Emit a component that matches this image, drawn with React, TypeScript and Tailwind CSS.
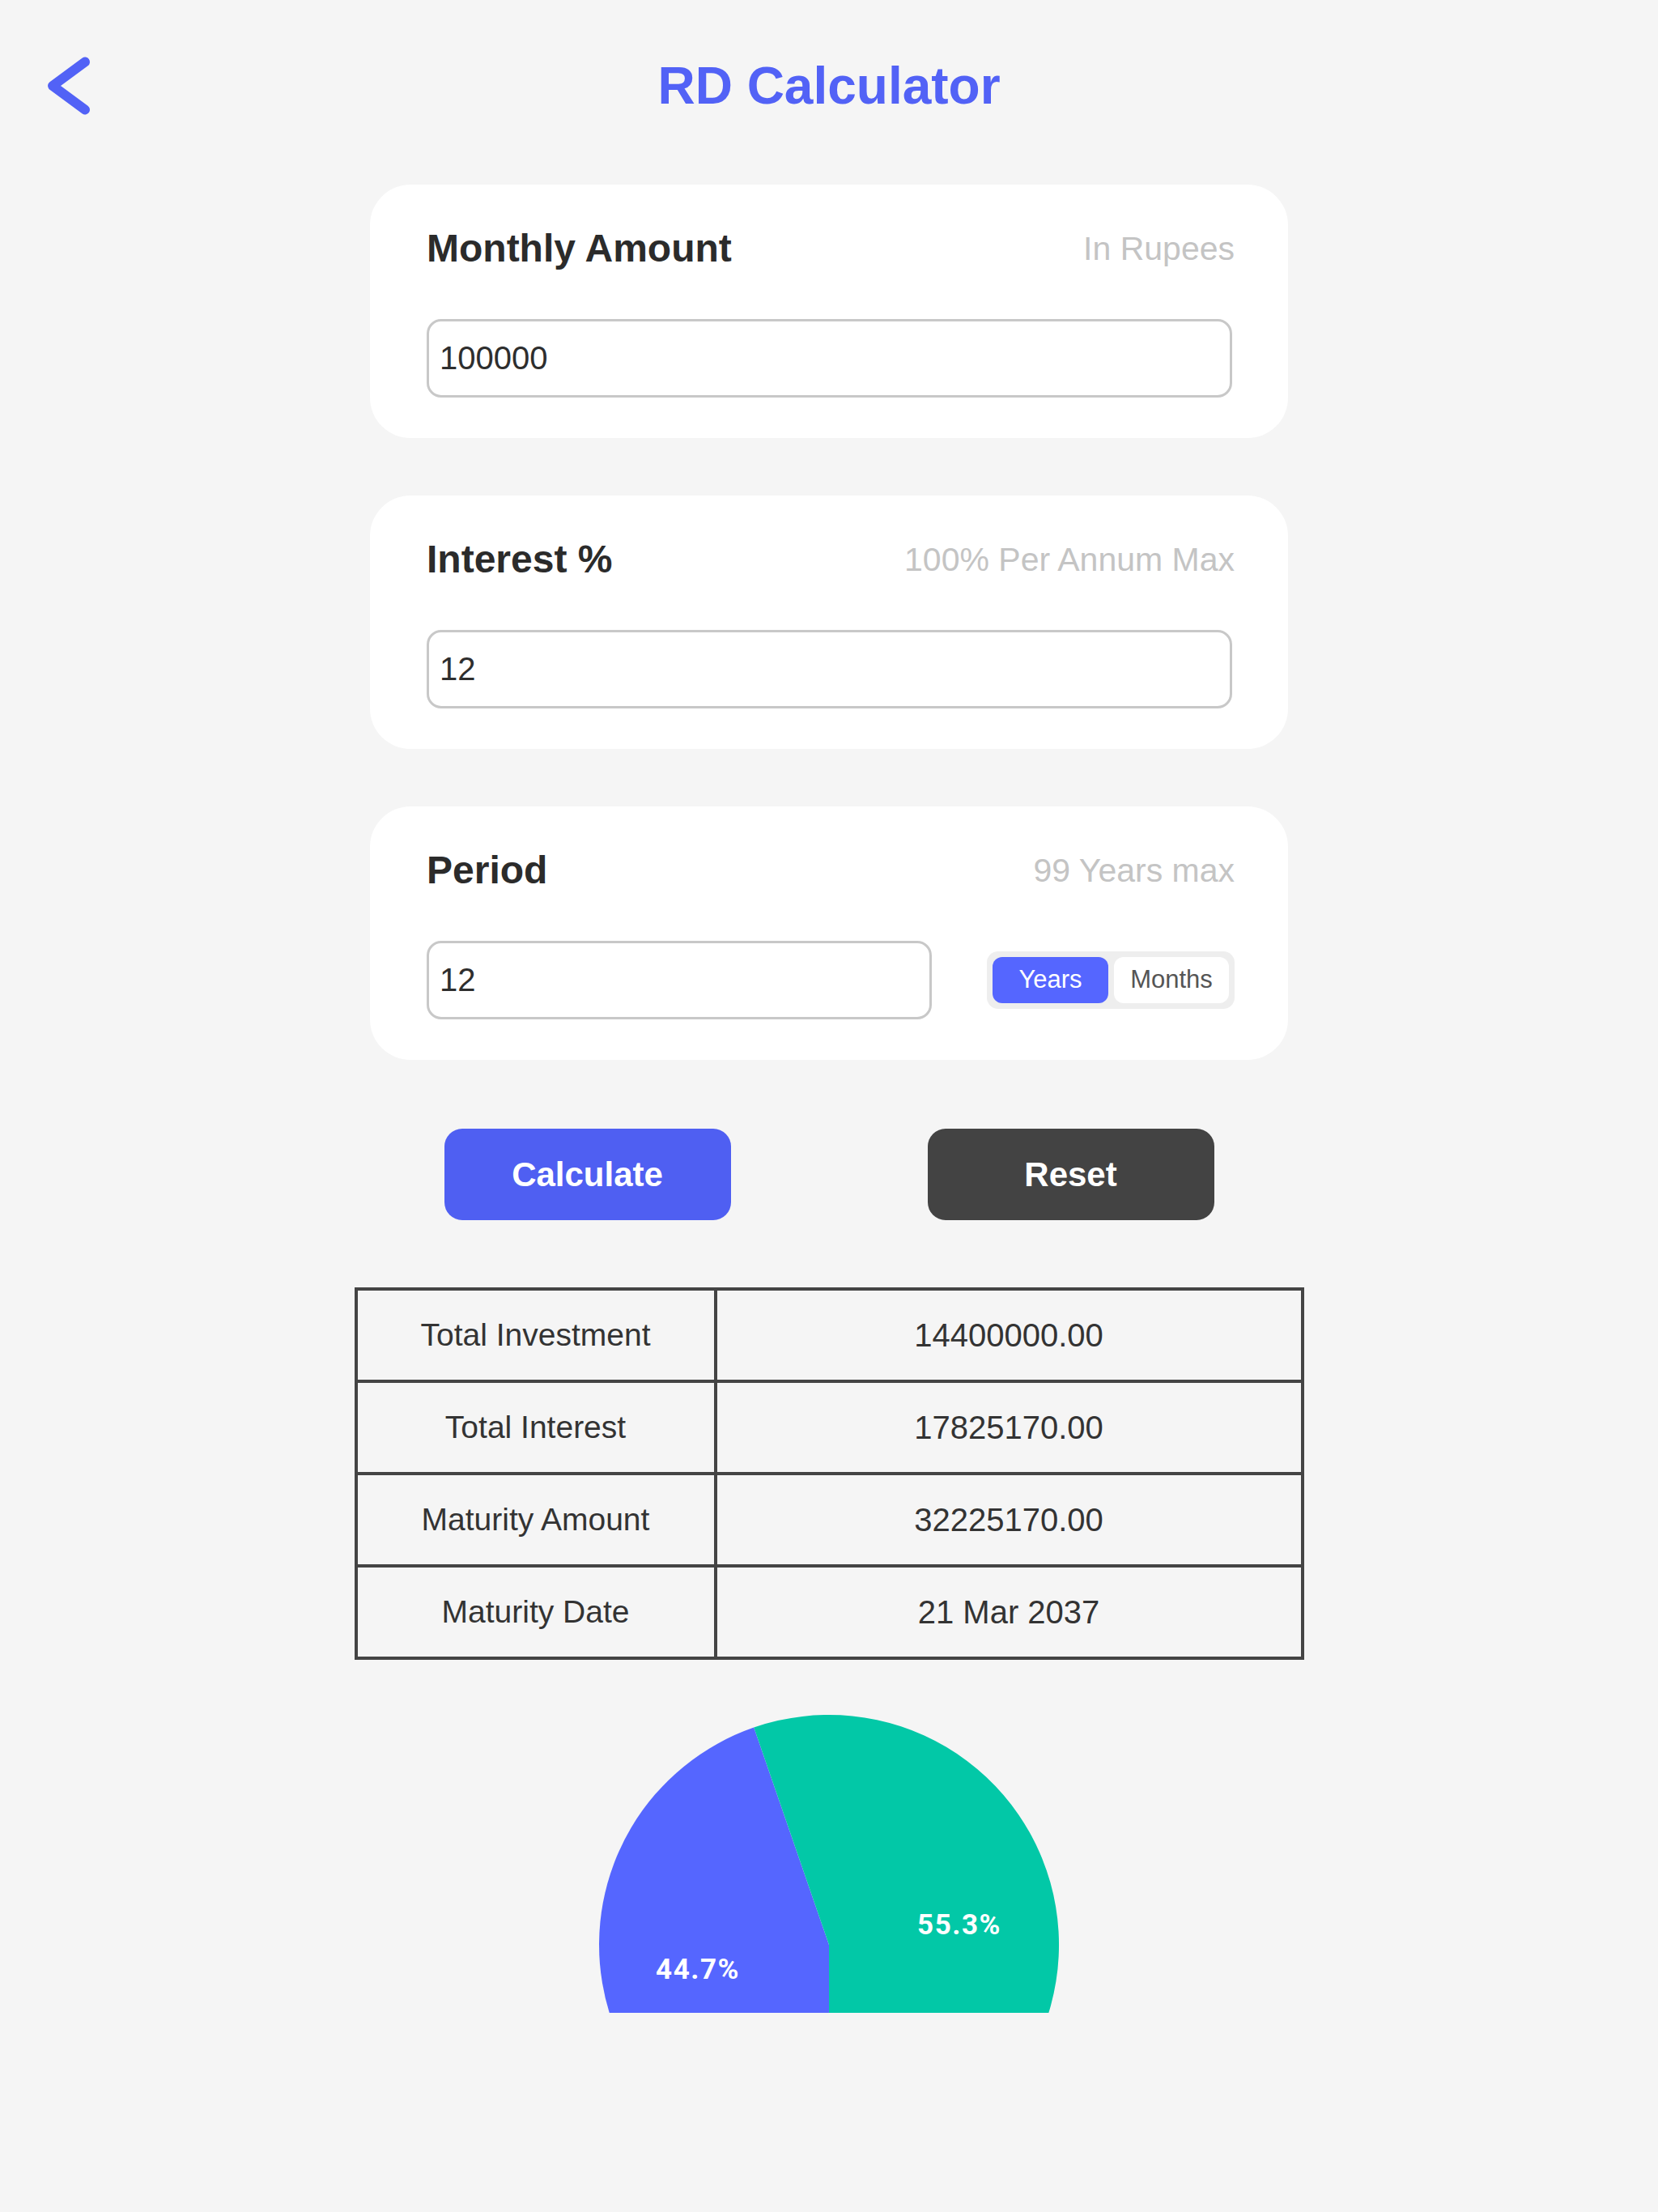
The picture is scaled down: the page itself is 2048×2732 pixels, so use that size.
// App.tsx — RD calculator screen: three input cards, actions, results table and a clipped pie

const results = [
  { label: "Total Investment", value: "14400000.00" },
  { label: "Total Interest", value: "17825170.00" },
  { label: "Maturity Amount", value: "32225170.00" },
  { label: "Maturity Date", value: "21 Mar 2037" },
];

function BackChevron() {
  return (
    <svg width="70" height="90" viewBox="0 0 70 90" fill="none">
      <path
        d="M53 15.5 L13 45 L53 74.5"
        stroke="#5262f6"
        strokeWidth="12"
        strokeLinecap="round"
        strokeLinejoin="round"
      />
    </svg>
  );
}

interface FieldCardProps {
  readonly label: string;
  readonly hint: string;
  readonly children: React.ReactNode;
}

function FieldCard({ label, hint, children }: FieldCardProps) {
  return (
    <div className="w-[1134px] rounded-[50px] bg-white pt-[51px] pr-[66px] pb-[50px] pl-[70px]">
      <div className="flex h-[56px] items-center justify-between">
        <span className="text-[48px] font-bold leading-[56px] text-[#2b2b2b]">{label}</span>
        <span className="text-[41px] leading-[56px] text-[#c4c4c4]">{hint}</span>
      </div>
      <div className="mt-[59px]">{children}</div>
    </div>
  );
}

function TextBox({ value, width }: { readonly value: string; readonly width: string }) {
  return (
    <input
      readOnly
      value={value}
      className={`${width} h-[97px] rounded-[18px] border-[3px] border-[#c8c8c8] bg-white pl-[13px] font-['Liberation_Sans',Arial,sans-serif] text-[40px] text-[#2e2e2e] outline-none`}
    />
  );
}

function PieChart() {
  return (
    <svg width="600" height="372" viewBox="0 0 600 372">
      <path d="M300 288 L300 572 A284 284 0 0 1 207.2 19.6 Z" fill="#5566ff" />
      <path d="M300 288 L207.2 19.6 A284 284 0 1 1 300 572 Z" fill="#02c8a7" />
      <text
        x="461"
        y="275"
        textAnchor="middle"
        fill="#ffffff"
        fontFamily="Roboto, 'Noto Sans', sans-serif"
        fontWeight="700"
        fontSize="35"
        letterSpacing="1.5"
      >
        55.3%
      </text>
      <text
        x="138"
        y="330"
        textAnchor="middle"
        fill="#ffffff"
        fontFamily="Roboto, 'Noto Sans', sans-serif"
        fontWeight="700"
        fontSize="35"
        letterSpacing="1.5"
      >
        44.7%
      </text>
    </svg>
  );
}

export default function App() {
  return (
    <div className="flex min-h-[2732px] flex-col items-center bg-[#f5f5f5] font-['Liberation_Sans',Arial,sans-serif]">
      {/* Header */}
      <div className="grid h-[212px] w-full grid-cols-[1fr_auto_1fr] items-center px-[52px]">
        <div className="flex items-center">
          <BackChevron />
        </div>
        <h1 className="text-[64px] font-bold leading-none text-[#5262f6]">RD Calculator</h1>
        <div />
      </div>

      {/* Inputs */}
      <div className="mt-[16px] flex flex-col gap-[71px]">
        <FieldCard label="Monthly Amount" hint="In Rupees">
          <TextBox value="100000" width="w-[995px]" />
        </FieldCard>
        <FieldCard label="Interest %" hint="100% Per Annum Max">
          <TextBox value="12" width="w-[995px]" />
        </FieldCard>
        <FieldCard label="Period" hint="99 Years max">
          <div className="flex items-center justify-between">
            <TextBox value="12" width="w-[624px]" />
            <div className="flex gap-[7px] rounded-[14px] bg-[#eeeeee] p-[7px]">
              <button className="h-[57px] w-[143px] rounded-[12px] bg-[#5566ff] text-[31px] text-white">
                Years
              </button>
              <button className="h-[57px] w-[142px] rounded-[12px] bg-white text-[31px] text-[#555555]">
                Months
              </button>
            </div>
          </div>
        </FieldCard>
      </div>

      {/* Actions */}
      <div className="mt-[85px] flex gap-[243px]">
        <button className="h-[113px] w-[354px] rounded-[22px] bg-[#4f5ff2] text-[42px] font-bold text-white">
          Calculate
        </button>
        <button className="h-[113px] w-[354px] rounded-[22px] bg-[#434343] text-[42px] font-bold text-white">
          Reset
        </button>
      </div>

      {/* Results */}
      <table className="mt-[83px] w-[1173px] table-fixed border-collapse">
        <colgroup>
          <col className="w-[444px]" />
          <col />
        </colgroup>
        <tbody>
          {results.map((row) => (
            <tr key={row.label} className="h-[114px]">
              <td className="border-[4px] border-[#444444] text-center text-[39px] text-[#333333]">
                {row.label}
              </td>
              <td className="border-[4px] border-[#444444] text-center text-[40px] text-[#333333]">
                {row.value}
              </td>
            </tr>
          ))}
        </tbody>
      </table>

      {/* Chart */}
      <div className="mt-[64px]">
        <PieChart />
      </div>
    </div>
  );
}
